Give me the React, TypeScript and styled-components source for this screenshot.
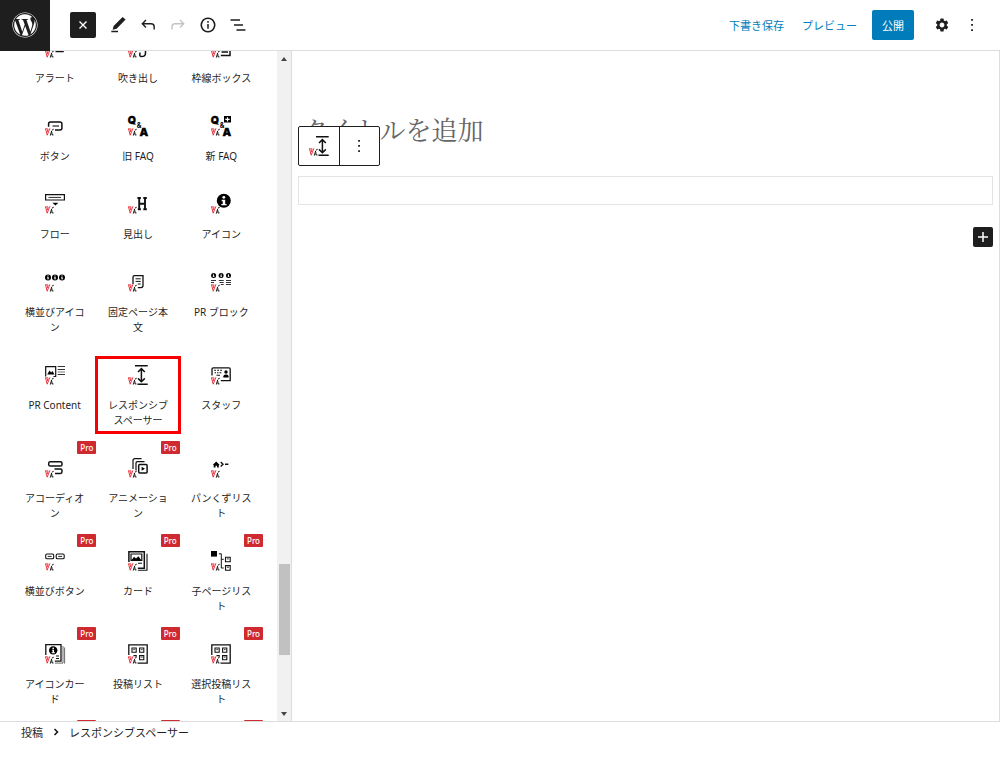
import React, { ReactNode, useLayoutEffect, useRef } from "react";
import styled, { createGlobalStyle } from "styled-components";
import { FaWordpress } from "react-icons/fa";
import { MdSettings } from "react-icons/md";

const ink = "#1e1e1e";
const line = "#dddddd";
const blue = "#007cba";
const red = "#cf2a30";

const GlobalStyle = createGlobalStyle`
  *, *::before, *::after { box-sizing: border-box; }
  body {
    margin: 0;
    background: #fff;
    color: ${ink};
    font-family: "Noto Sans", "Noto Sans CJK JP", sans-serif;
    font-size: 11px;
  }
  button { font: inherit; color: inherit; border: 0; padding: 0; background: none; cursor: pointer; }
  svg { display: block; }
`;

const Page = styled.div`
  display: flex;
  flex-direction: column;
  height: 100vh;
`;

const Header = styled.header`
  display: flex;
  align-items: center;
  height: 51px;
  flex: none;
  border-bottom: 1px solid ${line};
`;

const Logo = styled.a`
  display: grid;
  place-items: center;
  width: 50px;
  height: 51px;
  background: ${ink};
  color: #fff;
`;

const Tools = styled.div`
  display: flex;
  align-items: center;
  margin-left: 20px;
`;

const CloseButton = styled.button`
  display: grid;
  place-items: center;
  width: 26px;
  height: 26px;
  margin-right: 7px;
  border-radius: 2px;
  background: ${ink};
  color: #fff;
`;

const ToolButton = styled.button<{ $muted?: boolean }>`
  display: grid;
  place-items: center;
  width: 30px;
  height: 30px;
  color: ${(p) => (p.$muted ? "#c4c4c4" : ink)};
`;

const Actions = styled.div`
  display: flex;
  align-items: center;
  margin-left: auto;
  padding-right: 13px;
`;

const TextButton = styled.button`
  margin-right: 18px;
  color: ${blue};
`;

const PublishButton = styled.button`
  height: 30px;
  width: 42px;
  margin: 0 13px 0 -3px;
  border-radius: 2px;
  background: ${blue};
  color: #fff;
`;

const Main = styled.div`
  display: flex;
  flex: 1;
  min-height: 0;
`;

const Sidebar = styled.aside`
  display: flex;
  flex: none;
  width: 292px;
  border-right: 1px solid ${line};
`;

const BlockScroller = styled.div`
  flex: 1;
  overflow: hidden;
`;

const BlockList = styled.ul`
  display: grid;
  grid-template-columns: repeat(3, 1fr);
  margin: 0;
  padding: 0 14px 0 13px;
  list-style: none;
`;

const BlockItem = styled.li<{ $highlighted?: boolean }>`
  position: relative;
  ${(p) =>
    p.$highlighted &&
    `&::after {
      content: "";
      position: absolute;
      inset: 8px -1px 7px -1px;
      border: 3px solid #f80000;
      pointer-events: none;
    }`}
`;

const BlockButton = styled.button`
  display: flex;
  flex-direction: column;
  align-items: center;
  gap: 13px;
  width: 100%;
  padding: 17px 8px 13px;
`;

const BlockLabel = styled.span`
  font-size: 10px;
  line-height: 15px;
  min-height: 15px;
  max-width: 66px;
  line-break: anywhere;
  word-break: break-all;
`;

const ProBadge = styled.span`
  position: absolute;
  top: 0;
  right: 0;
  width: 19px;
  border-radius: 1px;
  background: ${red};
  color: #fff;
  font-size: 8px;
  font-weight: 500;
  line-height: 13px;
  text-align: center;
`;

const ScrollTrack = styled.div`
  display: flex;
  flex-direction: column;
  align-items: center;
  width: 14px;
  padding: 6px 0 5px;
  background: #f1f1f1;
`;

const ScrollThumb = styled.div`
  width: 11px;
  height: 91px;
  margin: auto 0 57px;
  background: #c1c1c1;
`;

const Editor = styled.main`
  flex: 1;
  min-width: 0;
  padding: 56px 6px 0;
  border-right: 1px solid ${line};
`;

const TitleInput = styled.input`
  display: block;
  width: 100%;
  height: 42px;
  padding: 0 0 0 4px;
  border: 0;
  outline: 0;
  background: none;
  font-family: "Noto Serif CJK JP", "Noto Serif JP", "Noto Sans CJK JP", serif;
  font-size: 26px;
  font-weight: 400;
  &::placeholder { color: #666; opacity: 1; }
`;

const SpacerBlock = styled.div`
  position: relative;
  height: 29px;
  margin-top: 27px;
  border: 1px solid #e4e4e4;
`;

const BlockToolbar = styled.div`
  position: absolute;
  left: -1px;
  bottom: 38px;
  display: flex;
  width: 82px;
  height: 40px;
  border: 1px solid ${ink};
  border-radius: 2px;
  background: #fff;
`;

const ToolbarButton = styled.button`
  display: grid;
  place-items: center;
  flex: 1;
  & + & { border-left: 1px solid ${ink}; }
`;

const AddButton = styled.button`
  display: grid;
  place-items: center;
  width: 20px;
  height: 20px;
  margin: 22px 0 0 auto;
  border-radius: 2px;
  background: ${ink};
  color: #fff;
`;

const Footer = styled.footer`
  flex: none;
  height: 48px;
  border-top: 1px solid ${line};
`;

const Breadcrumb = styled.nav`
  display: flex;
  align-items: center;
  gap: 10px;
  height: 20px;
  padding-left: 21px;
`;

const Mark = () => (
  <g fill="none">
    <path d="M0 12.9H3.2M.6 13L2.2 19.2L4.9 12.3M3 13.2L2.3 16" stroke="#ea2a35" strokeWidth=".95" />
    <path d="M8.7 13.2L7 14.1M6.7 14.8L5.3 19.6M6.9 16.3L7 18.9H8.5" stroke="#111" strokeWidth="1" />
  </g>
);

const Icon = ({ children }: { children?: ReactNode }) => (
  <svg width="20" height="20" viewBox="0 0 20 20" fill="none" stroke="#111" strokeWidth="1.5" overflow="visible" aria-hidden="true">
    {children}
    <Mark />
  </svg>
);

const Glyph = ({ x, y, size, children }: { x: number; y: number; size: number; children: string }) => (
  <text x={x} y={y} fontSize={size} fontWeight="900" fontFamily="Inter, sans-serif" fill="#000" stroke="#000" strokeWidth=".3">
    {children}
  </text>
);

const Info = ({ x, y, r }: { x: number; y: number; r: number }) => (
  <g stroke="none">
    <circle cx={x} cy={y} r={r} fill="#000" />
    <circle cx={x} cy={y - r * 0.5} r={r * 0.2} fill="#fff" />
    <path d={`M${x - r * 0.3} ${y - r * 0.15}h${r * 0.5}v${r * 0.6}h${r * 0.2}v${r * 0.2}h${-r * 0.75}v${-r * 0.2}h${r * 0.2}v${-r * 0.4}h${-r * 0.15}z`} fill="#fff" />
  </g>
);

const QA = () => (
  <>
    <Glyph x={-0.3} y={8} size={10.5}>Q</Glyph>
    <Glyph x={11.6} y={20} size={11}>A</Glyph>
    <text x="8.8" y="11.8" fontSize="7" fontWeight="700" fontFamily="Inter, sans-serif" fill="#000" stroke="none">&amp;</text>
  </>
);

const SpacerDrawing = () => (
  <path d="M7 .8H19.7M9.5 19.2H19.7M13.4 3.6V16.8M10 7L13.4 3.6L16.8 7M10 13.4L13.4 16.8L16.8 13.4" />
);

const PostListDrawing = () => (
  <>
    <path d="M.8 11V.8H19.2V19.2H9.5" strokeWidth="1.3" />
    <path d="M4 4H8.2V8.2H4ZM11.6 4H15.8V8.2H11.6ZM11.6 11.6H15.8V15.8H11.6ZM5.5 11.6H8.2V12.8" strokeWidth="1.1" />
    <path d="M5.3 5.6H7M12.9 5.6H14.6M12.9 13.2H14.6" strokeWidth=".8" />
  </>
);

type Block = { label: string; icon: ReactNode; pro?: boolean; highlighted?: boolean };

const blocks: Block[] = [
  { label: "アラート", icon: <path d="M2 10V3H18V13.6H10.5" /> },
  { label: "吹き出し", icon: <path d="M3 10V5H17.5V15C17.5 17.5 15.5 18.6 13.5 18.6C11 18.6 12 16 12 14.5" /> },
  { label: "枠線ボックス", icon: <path d="M1 10V4H19V17.6H9.8M10.5 14H17" /> },
  { label: "ボタン", icon: <><path d="M3.6 10.8V8Q3.6 6 5.3 6H15Q16.9 6 16.9 8V12Q16.9 14 15 14H10" /><path d="M7.5 10H14" strokeWidth="1.1" /></> },
  { label: "旧 FAQ", icon: <QA /> },
  { label: "新 FAQ", icon: <><QA /><path d="M13 0H20V6.6H13ZM15.9 1.2V2.7H14.3V3.9H15.9V5.4H17.1V3.9H18.7V2.7H17.1V1.2Z" fill="#000" fillRule="evenodd" stroke="none" /></> },
  { label: "フロー", icon: <><path d="M.6 .7H19.4V6H.6Z" strokeWidth="1.2" /><path d="M3.5 3.4H16" strokeWidth=".9" /><path d="M7.4 8.7H13.4L10.4 11.4Z" fill="#000" stroke="none" /></> },
  { label: "見出し", icon: <path d="M11.2 4V15.5M17 4V15.5M11.2 9.8H17M9.4 4H12.9M15.3 4H18.8M9.8 15.3H12.9M15.3 15.3H18.8" strokeWidth="1.9" /> },
  { label: "アイコン", icon: <Info x={12.8} y={6.8} r={7} /> },
  { label: "横並びアイコン", icon: <><Info x={3} y={5.4} r={3} /><Info x={10} y={5.4} r={3} /><Info x={17} y={5.4} r={3} /></> },
  { label: "固定ページ本文", icon: <><path d="M5 12V5.2Q5 3.7 6.5 3.7H15V13.8Q15 15.6 13 15.6H9.8" strokeWidth="1.3" /><path d="M7.5 6.8H12.7M7.5 9.4H12.7M9.8 12H12.7" strokeWidth="1" /></> },
  { label: "PR ブロック", icon: <><Info x={2.6} y={3.4} r={2.5} /><Info x={10.1} y={3.4} r={2.5} /><Info x={17.5} y={3.4} r={2.5} /><path d="M0 8.5H5M0 10.5H3M7.8 8.5H12.7M8.5 10.5H12.7M9.8 12.5H12.7M15 8.5H20M15 10.5H20M15 12.5H20" strokeWidth="1" stroke="#333" /></> },
  { label: "PR Content", icon: <><path d="M.7 11.5V1.7H10.7V11.5H8.5" strokeWidth="1.2" /><path d="M2.2 9.5L4.5 5.5L6.2 7.5L7.5 6L9.5 9.5Z" fill="#000" stroke="none" /><path d="M12.7 1.5H20M12.7 4.5H20M12.7 9.5H20" strokeWidth="1" stroke="#333" /><path d="M12.7 7H20" strokeWidth="1" stroke="#777" /></> },
  { label: "レスポンシブスペーサー", icon: <SpacerDrawing />, highlighted: true },
  { label: "スタッフ", icon: <><path d="M1 10.5V4Q1 2.8 2.3 2.8H18Q19.2 2.8 19.2 4V15.6H9.8" strokeWidth="1.3" /><path d="M3.2 5.3H5M6.2 5.3H8M9.2 5.3H11M3.6 7.8H5M6 7.8H7.5M8.5 7.8H10.4M5.5 10.2H9" strokeWidth="1.1" /><circle cx="15" cy="7" r="1.7" fill="#000" stroke="none" /><path d="M12.3 12.5V10.9Q13.2 9.6 15 9.6T17.6 10.9V12.5Z" fill="#000" stroke="none" /></> },
  { label: "アコーディオン", pro: true, icon: <><rect x="3.7" y="3.7" width="13.3" height="4.4" rx="1.6" /><path d="M9.5 10.9H15.5Q17 10.9 17 12.4V13.8Q17 15.4 15.5 15.4H10" /></> },
  { label: "アニメーション", pro: true, icon: <><rect x="10.7" y="6.6" width="8.4" height="8.4" rx="1" /><path d="M13.6 8.8L17 10.8L13.6 12.8Z" fill="#000" stroke="none" /><path d="M8 12.5V5Q8 3.7 9.3 3.7H16.5M5 11V2.4Q5 .7 6.8 .7H13.5" strokeWidth="1.2" /></> },
  { label: "パンくずリスト", icon: <><path d="M1.7 7L5.2 3.6L8.7 7H7.8V9.6H6V7.8H4.5V9.6H2.7V7Z" fill="#000" stroke="none" /><path d="M9.7 4L12 6.3L9.7 8.6M14 6.3H17.4" strokeWidth="1.4" /></> },
  { label: "横並びボタン", pro: true, icon: <><rect x=".7" y="3" width="8" height="4.8" rx="1.3" strokeWidth="1.1" /><rect x="11.2" y="3" width="8" height="4.8" rx="1.3" strokeWidth="1.1" /><path d="M2.7 5.4H6.7M13.2 5.4H17.2" strokeWidth=".9" /></> },
  { label: "カード", pro: true, icon: <><path d="M.9 11V.7H16.3V17.2H9.8" /><path d="M3 3H13.8V9.4H3Z" strokeWidth="1.2" /><path d="M3.4 9.4L6 5.7L8 7.5L10.5 5.3L13.4 9.4Z" fill="#000" stroke="none" /><path d="M10 12.2H14M19 2.8V19.3H10" strokeWidth="1.1" /></> },
  { label: "子ページリスト", pro: true, icon: <><path d="M0 0H6V5.6H0Z" fill="#000" stroke="none" /><path d="M7.8 2.8H10.3V17H12.7M10.3 8.3H12.7" strokeWidth="1" /><path d="M14.5 6.2H19.2V10.8H14.5ZM14.5 14.6H19.2V19.2H14.5Z" strokeWidth="1.1" /><path d="M15.9 7.9H17.9M15.9 16.3H17.9" strokeWidth=".8" /></> },
  { label: "アイコンカード", pro: true, icon: <><path d="M.8 11V.7H16V17.2H9.8" strokeWidth="1.3" /><Info x={8.2} y={6.4} r={4.2} /><path d="M11 12H14M11 14.5H14" strokeWidth="1" /><path d="M18 2V19.1H10M19.6 3.5V19.6" strokeWidth=".8" stroke="#444" /></> },
  { label: "投稿リスト", pro: true, icon: <PostListDrawing /> },
  { label: "選択投稿リスト", pro: true, icon: <PostListDrawing /> },
];

const MoreIcon = () => (
  <svg width="20" height="20" viewBox="0 0 20 20" fill="#111" aria-hidden="true">
    <path d="M9.2 4h1.7v1.7H9.2zM9.2 9.1h1.7v1.7H9.2zM9.2 14.2h1.7v1.7H9.2z" />
  </svg>
);

const Arrow = ({ down }: { down?: boolean }) => (
  <svg width="6" height="4" viewBox="0 0 6 4" fill="#444" aria-hidden="true">
    <path d={down ? "M0 0H6L3 4Z" : "M0 4H6L3 0Z"} />
  </svg>
);

const Stroke = ({ d, width = 1.4 }: { d: string; width?: number }) => (
  <svg width="20" height="20" viewBox="0 0 20 20" fill="none" stroke="currentColor" strokeWidth={width} aria-hidden="true">
    <path d={d} />
  </svg>
);

export default function App() {
  const scroller = useRef<HTMLDivElement>(null);
  useLayoutEffect(() => {
    if (scroller.current) scroller.current.scrollTop = 30;
  }, []);

  return (
    <Page>
      <GlobalStyle />
      <Header>
        <Logo href="#" aria-label="WordPress"><FaWordpress size={26} /></Logo>
        <Tools>
          <CloseButton aria-label="閉じる"><Stroke d="M6.5 6.5L13.5 13.5M13.5 6.5L6.5 13.5" /></CloseButton>
          <ToolButton aria-label="編集">
            <svg width="20" height="20" viewBox="0 0 20 20" fill="currentColor" aria-hidden="true">
              <path d="M14.6 1.9L17.6 4.6L8.6 13.7L4.6 14.8L5.6 11ZM3.3 15.8H10V17.2H3.3Z" />
            </svg>
          </ToolButton>
          <ToolButton aria-label="元に戻す"><Stroke d="M8 5L4.3 8.7L8 12.4M4.5 8.7H13Q16.2 8.7 16.2 11.7V14.5" /></ToolButton>
          <ToolButton aria-label="やり直す" $muted><Stroke d="M12 5L15.7 8.7L12 12.4M15.5 8.7H7Q4 8.7 4 11.7V14.5" /></ToolButton>
          <ToolButton aria-label="詳細"><Stroke d="M10 3.3A6.7 6.7 0 1 1 9.99 3.3M10 6V7.7M10 9V13.8" width={1.5} /></ToolButton>
          <ToolButton aria-label="リスト表示"><Stroke d="M2.5 5H12M6 10H15M8.5 15H17.5" /></ToolButton>
        </Tools>
        <Actions>
          <TextButton>下書き保存</TextButton>
          <TextButton>プレビュー</TextButton>
          <PublishButton>公開</PublishButton>
          <ToolButton aria-label="設定"><MdSettings size={16} /></ToolButton>
          <ToolButton aria-label="オプション"><MoreIcon /></ToolButton>
        </Actions>
      </Header>
      <Main>
        <Sidebar>
          <BlockScroller ref={scroller}>
            <BlockList>
              {blocks.map((block) => (
                <BlockItem key={block.label} $highlighted={block.highlighted}>
                  <BlockButton>
                    <Icon>{block.icon}</Icon>
                    <BlockLabel>{block.label}</BlockLabel>
                  </BlockButton>
                  {block.pro && <ProBadge>Pro</ProBadge>}
                </BlockItem>
              ))}
              {[0, 1, 2].map((index) => (
                <BlockItem key={index}>
                  <BlockButton aria-hidden="true" tabIndex={-1}>
                    <Icon />
                    <BlockLabel />
                  </BlockButton>
                  <ProBadge>&nbsp;</ProBadge>
                </BlockItem>
              ))}
            </BlockList>
          </BlockScroller>
          <ScrollTrack>
            <Arrow />
            <ScrollThumb />
            <Arrow down />
          </ScrollTrack>
        </Sidebar>
        <Editor>
          <TitleInput aria-label="タイトルを追加" placeholder="タイトルを追加" />
          <SpacerBlock>
            <BlockToolbar>
              <ToolbarButton aria-label="レスポンシブスペーサー"><Icon><SpacerDrawing /></Icon></ToolbarButton>
              <ToolbarButton aria-label="オプション"><MoreIcon /></ToolbarButton>
            </BlockToolbar>
          </SpacerBlock>
          <AddButton aria-label="ブロックを追加"><Stroke d="M10 5V15M5 10H15" width={1.5} /></AddButton>
        </Editor>
      </Main>
      <Footer>
        <Breadcrumb aria-label="パンくず">
          <button>投稿</button>
          <svg width="6" height="8" viewBox="0 0 6 8" fill="none" stroke="#111" strokeWidth="1.5" aria-hidden="true">
            <path d="M1.5 1L4.5 4L1.5 7" />
          </svg>
          <span>レスポンシブスペーサー</span>
        </Breadcrumb>
      </Footer>
    </Page>
  );
}
